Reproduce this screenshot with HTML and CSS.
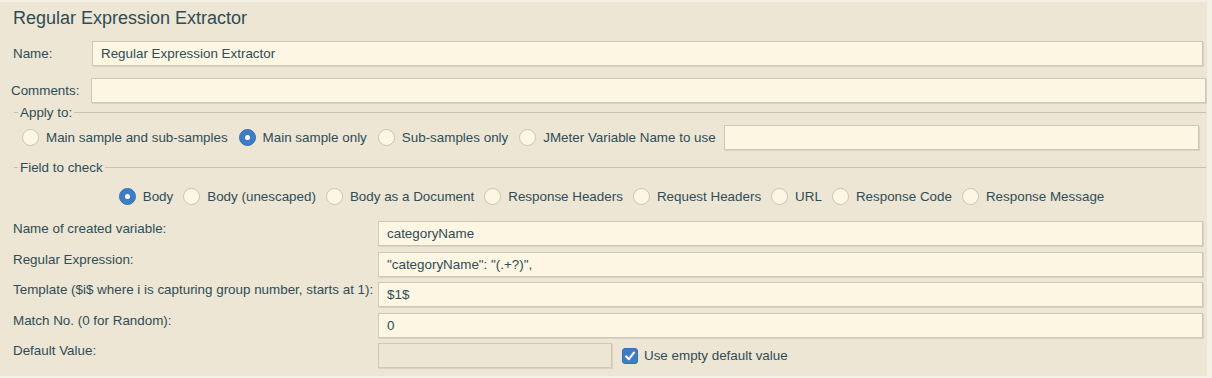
FILE: index.html
```html
<!DOCTYPE html>
<html lang="en">
<head>
  <meta charset="UTF-8" />
  <title>Regular Expression Extractor</title>
  <link rel="stylesheet" href="styles.css">
</head>
<body>
  <div class="panel">
    <h1 class="panel-title">Regular Expression Extractor</h1>

    <div class="field-row name-row">
      <label class="field-label">Name:</label>
      <div class="text-box">Regular Expression Extractor</div>
    </div>

    <div class="field-row comments-row">
      <label class="field-label">Comments:</label>
      <div class="text-box"></div>
    </div>

    <div class="group-title apply-title">
      <span class="dash"></span>
      <span>Apply to:</span>
      <span class="rule"></span>
    </div>
    <div class="radio-row apply-row">
      <span class="radio"></span><span class="opt">Main sample and sub-samples</span>
      <span class="radio checked"></span><span class="opt">Main sample only</span>
      <span class="radio"></span><span class="opt">Sub-samples only</span>
      <span class="radio"></span><span class="opt">JMeter Variable Name to use</span>
      <div class="text-box var-box"></div>
    </div>

    <div class="group-title check-title">
      <span class="dash"></span>
      <span>Field to check</span>
      <span class="rule"></span>
    </div>
    <div class="radio-row check-row">
      <span class="radio checked"></span><span class="opt">Body</span>
      <span class="radio"></span><span class="opt">Body (unescaped)</span>
      <span class="radio"></span><span class="opt">Body as a Document</span>
      <span class="radio"></span><span class="opt">Response Headers</span>
      <span class="radio"></span><span class="opt">Request Headers</span>
      <span class="radio"></span><span class="opt">URL</span>
      <span class="radio"></span><span class="opt">Response Code</span>
      <span class="radio"></span><span class="opt">Response Message</span>
    </div>

    <div class="settings">
      <label class="set-label">Name of created variable:</label>
      <div class="text-box">categoryName</div>

      <label class="set-label">Regular Expression:</label>
      <div class="text-box">"categoryName": "(.+?)",</div>

      <label class="set-label">Template ($i$ where i is capturing group number, starts at 1):</label>
      <div class="text-box">$1$</div>

      <label class="set-label">Match No. (0 for Random):</label>
      <div class="text-box">0</div>

      <label class="set-label">Default Value:</label>
      <div class="default-row">
        <div class="text-box disabled"></div>
        <span class="checkbox">
          <svg width="12" height="12" viewBox="0 0 12 12"><path d="M2.2 6.4 L4.9 9.2 L9.9 2.6" fill="none" stroke="#fff" stroke-width="2.1" stroke-linecap="round" stroke-linejoin="round"/></svg>
        </span>
        <span class="opt">Use empty default value</span>
      </div>
    </div>
  </div>
</body>
</html>
```

FILE: styles.css
```css
* {
  margin: 0;
  padding: 0;
  box-sizing: border-box;
}

body {
  background: #f4f0e6;
  font-family: 'Liberation Sans', Arial, sans-serif;
  font-size: 13.4px;
  color: #2e4d57;
}

.panel {
  width: 1207px;
  height: 374px;
  margin-top: 2px;
  background: #ede6d5;
  padding-top: 6px;
}

.panel-title {
  font-size: 18px;
  font-weight: normal;
  line-height: 20px;
  padding-left: 13px;
  color: #2d4c58;
}

.field-row {
  display: flex;
  align-items: center;
}

.name-row {
  margin-top: 13px;
  padding-left: 13px;
  padding-right: 4px;
}

.name-row .field-label {
  width: 79px;
}

.comments-row {
  margin-top: 12px;
  padding-left: 11px;
  padding-right: 1px;
}

.comments-row .field-label {
  width: 80px;
}

.text-box {
  flex: 1;
  height: 25px;
  line-height: 23px;
  padding: 0 8px;
  background: #fdf6e3;
  border: 1px solid #cfc8b6;
  box-shadow: 1px 1px 0 rgba(160, 150, 130, 0.25);
  white-space: nowrap;
  overflow: hidden;
}

.group-title {
  display: flex;
  align-items: center;
  gap: 2px;
  height: 16px;
  padding-left: 14px;
  padding-right: 1px;
}

.apply-title {
  margin-top: 1px;
}

.check-title {
  margin-top: 9px;
}

.dash {
  width: 4px;
  border-top: 1px solid #c8c1ae;
}

.rule {
  flex: 1;
  border-top: 1px solid #c8c1ae;
}

.radio-row {
  display: flex;
  align-items: center;
}

.apply-row {
  margin-top: 5px;
  padding-left: 22px;
  padding-right: 8px;
  height: 25px;
}

.check-row {
  margin-top: 12px;
  justify-content: center;
  padding-left: 26px;
  height: 18px;
}

.check-row .opt {
  margin-right: 10px;
}

.radio {
  width: 17px;
  height: 17px;
  border-radius: 50%;
  background: #fdf6e3;
  border: 1px solid #cbc4b2;
  margin-right: 7px;
  flex-shrink: 0;
  position: relative;
}

.radio.checked {
  background: #3d7dc5;
  border-color: #3570b3;
}

.radio.checked::after {
  content: "";
  position: absolute;
  left: 5px;
  top: 5px;
  width: 5px;
  height: 5px;
  border-radius: 50%;
  background: #fff;
}

.opt {
  margin-right: 11px;
  white-space: nowrap;
}

.var-box {
  margin-left: -3px;
}

.settings {
  display: grid;
  grid-template-columns: 365px 1fr;
  row-gap: 5.5px;
  margin-top: 16px;
  padding-left: 13px;
  padding-right: 4px;
}

.set-label {
  line-height: 16px;
  white-space: nowrap;
}

.default-row {
  display: flex;
  align-items: center;
}

.default-row .text-box {
  flex: none;
  width: 234px;
}

.text-box.disabled {
  background: #ede6d5;
}

.checkbox {
  display: flex;
  align-items: center;
  justify-content: center;
  width: 16px;
  height: 16px;
  margin-left: 10px;
  margin-right: 6px;
  border-radius: 3px;
  background: #3d7dc5;
  border: 1px solid #3570b3;
}
```
